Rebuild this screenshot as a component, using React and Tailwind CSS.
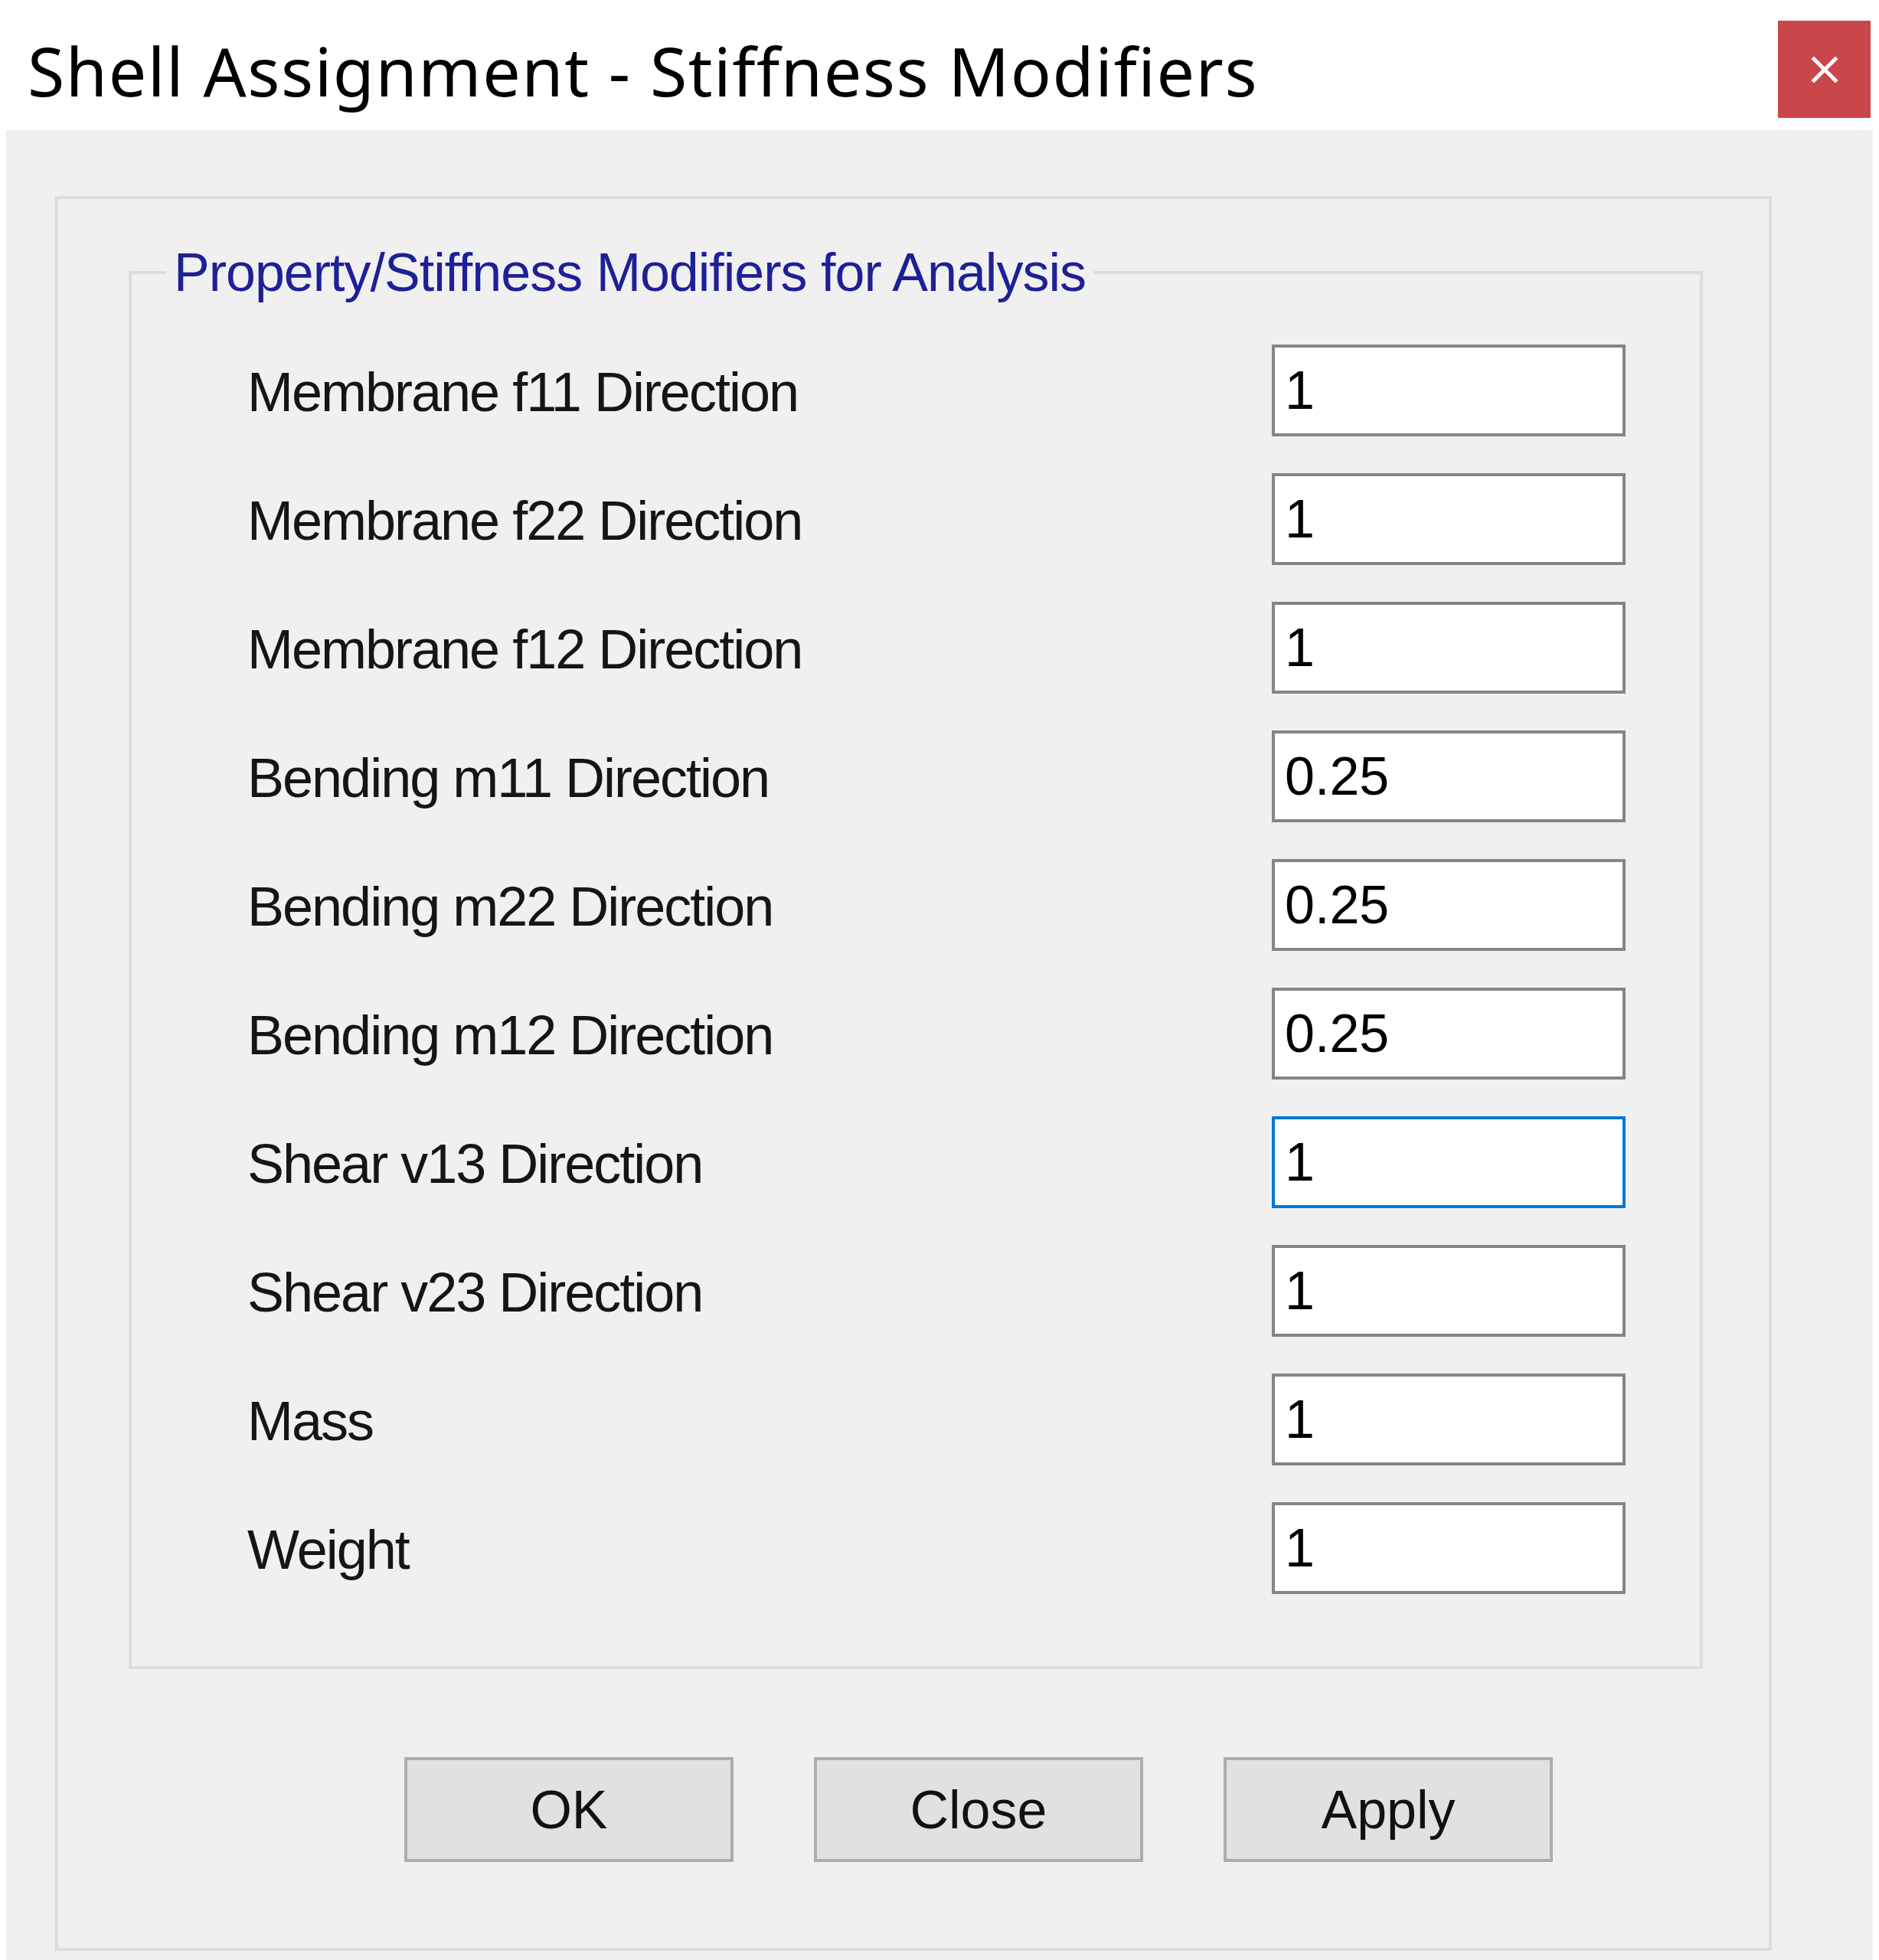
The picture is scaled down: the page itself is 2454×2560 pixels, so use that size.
const rows = [
  { label: 'Membrane f11 Direction', value: '1' },
  { label: 'Membrane f22 Direction', value: '1' },
  { label: 'Membrane f12 Direction', value: '1' },
  { label: 'Bending m11 Direction', value: '0.25' },
  { label: 'Bending m22 Direction', value: '0.25' },
  { label: 'Bending m12 Direction', value: '0.25' },
  { label: 'Shear v13 Direction', value: '1', focused: true },
  { label: 'Shear v23 Direction', value: '1' },
  { label: 'Mass', value: '1' },
  { label: 'Weight', value: '1' },
];

function DialogButton({ children }) {
  return (
    <button className="w-[430px] h-[137px] bg-[#e1e1e1] border-4 border-[#adadad] text-[70px] leading-none text-[#111]">
      {children}
    </button>
  );
}

export default function App() {
  return (
    <div className="w-[2454px] h-[2560px] bg-white flex flex-col font-['Liberation_Sans',Arial,sans-serif]">
      {/* Title bar */}
      <div className="h-[170px] shrink-0 flex items-start justify-between">
        <h1 className="pl-[36px] pt-[48px] text-[88px] leading-none tracking-[1.5px] text-black font-['Noto_Sans',sans-serif] font-normal">
          Shell Assignment - Stiffness Modifiers
        </h1>
        <button className="mt-[27px] mr-[11px] w-[121px] h-[127px] bg-[#c9464b] flex items-center justify-center">
          <svg width="36" height="36" viewBox="0 0 36 36">
            <path d="M4 4 L32 32 M32 4 L4 32" stroke="white" strokeWidth="5" strokeLinecap="square" />
          </svg>
        </button>
      </div>

      {/* Body */}
      <div className="flex-1 mx-[8px] bg-[#f0f0f0] pt-[86px] pl-[64px] pr-[132px]">
        <div className="border-4 border-[#dddddd] pb-[112px]">
          <fieldset className="mt-[60px] ml-[92px] mr-[86px] border-4 border-[#dddddd] p-0 pt-[58px] pb-[94px]">
            <legend className="ml-[45px] px-[10px] text-[70px] leading-[72px] tracking-[-1px] text-[#1e2096]">
              Property/Stiffness Modifiers for Analysis
            </legend>
            <div className="flex flex-col gap-[48px] pl-[151px] pr-[97px]">
              {rows.map((row) => (
                <div key={row.label} className="h-[120px] flex items-center justify-between">
                  <span className="text-[72px] tracking-[-2px] leading-none text-[#151515] pt-[4px]">{row.label}</span>
                  <div
                    className={
                      row.focused
                        ? 'w-[462px] h-[120px] bg-white border-4 border-[#0078d7] flex items-center pl-[13px] text-[70px] leading-none text-black'
                        : 'w-[462px] h-[120px] bg-white border-4 border-[#858585] flex items-center pl-[13px] text-[70px] leading-none text-black'
                    }
                  >
                    {row.value}
                  </div>
                </div>
              ))}
            </div>
          </fieldset>

          <div className="mt-[115px] pl-[452px] flex gap-[105px]">
            <DialogButton>OK</DialogButton>
            <DialogButton>Close</DialogButton>
            <DialogButton>Apply</DialogButton>
          </div>
        </div>
      </div>
    </div>
  );
}
